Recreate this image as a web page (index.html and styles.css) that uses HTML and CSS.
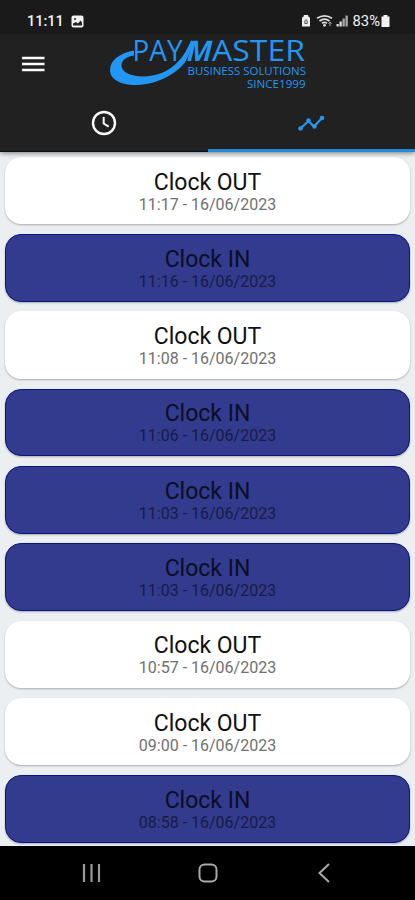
FILE: index.html
```html
<!DOCTYPE html>
<html lang="en">
<head>
<meta charset="utf-8">
<title>Paymaster</title>
<link rel="stylesheet" href="styles.css">
</head>
<body>
<div class="phone">
  <div class="status">
    <span class="time">11:11</span>
    <svg class="photo" width="13" height="13" viewBox="0 0 13 13"><rect x=".5" y=".5" width="12" height="12" rx="2" fill="#f2f2f2"/><path d="M2 10.5V8.5l3-1.5 2 1.5L9.5 5.500l1.500 2v3z" fill="#222"/><circle cx="4" cy="4" r="1" fill="#222"/></svg>
    <svg class="signals" width="48" height="16" viewBox="0 0 48 16">
      <path d="M0 5.500q0-2 1.800-2V2h4.400v1.500q1.800 0 1.800 2V13.500H0z" fill="#eee"/><path d="M2.800 10.500V8L4 6.500 5.200 8v2.500z" fill="none" stroke="#555"/>
      <g fill="none" stroke="#ddd" stroke-width="1.700"><path d="M15 5.300q7.500-5 15 0M17.500 8q5-3.800 10 0M20 10.300q2.500-1.800 5 0"/></g><circle cx="22.500" cy="12.300" r="1.400" fill="#ddd"/><path d="M28 13V9m-1.500 1.500L28 9l1.500 1.500" fill="none" stroke="#aaa"/>
      <g fill="#ddd"><path d="M34.500 11h2.300v2.500h-2.300zM37.500 8.500h2.300v5h-2.300z"/><path d="M40.500 5.500h2.300v8h-2.300zM43.500 2.500h2.300v11h-2.300z" fill="#aaa"/></g>
    </svg>
    <span class="percent">83%</span>
    <svg class="battery" width="9" height="12" viewBox="0 0 9 12"><path d="M2.500 0h4v1.500h2V12h-8V1.500h2z" fill="#f2f2f2"/></svg>
  </div>
  <header class="header">
    <svg class="menu" width="23" height="16" viewBox="0 0 23 16"><path d="M0 2h22.500M0 8h22.500M0 14h22.500" stroke="#fafafa" stroke-width="2.600"/></svg>
    <svg class="logo" width="215" height="61" viewBox="100 34 215 61">
      <g fill="#2196f3">
        <path d="M134 50.500C119 53 110 61 110 70c0 10 12 15.500 27 15 20-.6 38-10.500 48-22.500L195 42l-4-1.500C183 60 170 75 145 76.500c-15 .5-24-5-23.500-11.500.3-5 5-8.500 12.500-9.500z"/>
        <text class="mark" x="132.500" y="60.500" textLength="50" lengthAdjust="spacingAndGlyphs">PAY</text>
        <text class="mark mark-m" transform="translate(185 60.500) skewX(-14)" textLength="25" lengthAdjust="spacingAndGlyphs">M</text>
        <text class="mark" x="212" y="60.500" textLength="93" lengthAdjust="spacingAndGlyphs">ASTER</text>
        <text class="tagline" x="187.500" y="74.500" textLength="118.500" lengthAdjust="spacingAndGlyphs">BUSINESS SOLUTIONS</text>
        <text class="since" x="247" y="88" textLength="58.500" lengthAdjust="spacingAndGlyphs">SINCE1999</text>
      </g>
    </svg>
  </header>
  <nav class="tabs">
    <div class="tab"><svg width="26" height="26" viewBox="0 0 26 26" fill="none" stroke="#fafafa"><circle cx="13" cy="13" r="11" stroke-width="2.400"/><path d="M12.700 7v6.500l5 3.200" stroke-width="2"/></svg></div>
    <div class="tab active"><svg width="28" height="18" viewBox="0 0 28 18" fill="#2a96ea"><path d="M3.500 14.500l8-7.500 5.500 5.500 8-8.500" fill="none" stroke="#2a96ea" stroke-width="2.300"/><circle cx="3.500" cy="14.500" r="2.300"/><circle cx="11.500" cy="6.500" r="2.200"/><circle cx="17.500" cy="12.500" r="2.200"/><circle cx="25" cy="4" r="2.300"/></svg></div>
  </nav>
  <main class="list">
    <article class="card"><h2>Clock OUT</h2><p>11:17 - 16/06/2023</p></article>
    <article class="card in"><h2>Clock IN</h2><p>11:16 - 16/06/2023</p></article>
    <article class="card"><h2>Clock OUT</h2><p>11:08 - 16/06/2023</p></article>
    <article class="card in"><h2>Clock IN</h2><p>11:06 - 16/06/2023</p></article>
    <article class="card in"><h2>Clock IN</h2><p>11:03 - 16/06/2023</p></article>
    <article class="card in"><h2>Clock IN</h2><p>11:03 - 16/06/2023</p></article>
    <article class="card"><h2>Clock OUT</h2><p>10:57 - 16/06/2023</p></article>
    <article class="card"><h2>Clock OUT</h2><p>09:00 - 16/06/2023</p></article>
    <article class="card in"><h2>Clock IN</h2><p>08:58 - 16/06/2023</p></article>
  </main>
  <footer class="navbar">
    <svg width="20" height="20" viewBox="0 0 20 20"><path d="M3 1v18M10.500 1v18M18 1v18" stroke="#999" stroke-width="2.200"/></svg>
    <svg width="20" height="20" viewBox="0 0 20 20"><rect x="1.500" y="1.500" width="17" height="17" rx="5" fill="none" stroke="#aaa" stroke-width="2"/></svg>
    <svg width="20" height="20" viewBox="0 0 20 20"><path d="M15 1L5.500 10l9.500 9" fill="none" stroke="#aaa" stroke-width="2"/></svg>
  </footer>
</div>
</body>
</html>
```
FILE: styles.css
```css
body {
  margin: 0;
  font-family: Roboto, sans-serif;
}
svg {
  display: block;
  flex: none;
  overflow: visible;
}
.phone {
  width: 415px;
  height: 900px;
  display: flex;
  flex-direction: column;
  overflow: hidden;
  background: #ebeff2;
}
.status {
  height: 34px;
  box-sizing: border-box;
  padding: 8px 25px 0 27px;
  display: flex;
  align-items: center;
  background: #1a1a1a;
  color: #f2f2f2;
  font-size: 14.5px;
  font-weight: 500;
}
.photo {
  margin-left: 7px;
}
.signals {
  margin-left: auto;
}
.percent {
  margin-left: 3px;
  font-size: 14.800px;
  font-weight: 400;
}
.battery {
  margin-left: 1px;
}
.header {
  height: 61px;
  display: flex;
  background: #212121;
  position: relative;
  z-index: 1;
}
.menu {
  margin: 22px 55.500px 0 21.500px;
}
.mark {
  font-family: "Open Sans", sans-serif;
  font-size: 28.500px;
}
.mark-m {
  font-weight: 700;
}
.tagline {
  font-family: "Open Sans", sans-serif;
  font-size: 11.500px;
  font-weight: 500;
}
.since {
  font-family: "Open Sans", sans-serif;
  font-size: 10.500px;
  font-weight: 500;
}
.tabs {
  height: 57px;
  display: flex;
  background: #212121;
  box-shadow: 0 1px 5px rgba(0, 0, 0, .5);
  position: relative;
}
.tab {
  flex: 1;
  display: flex;
  justify-content: center;
  align-items: center;
  box-sizing: border-box;
  border-bottom: 1px solid #111;
}
.active {
  border-bottom: 3px solid #2388d5;
}
.active svg {
  margin-top: 2px;
}
.list {
  flex: 1;
  box-sizing: border-box;
  padding: 4.900px 5px 0;
  display: flex;
  flex-direction: column;
  gap: 9.8px;
}
.card {
  height: 67.500px;
  flex: none;
  box-sizing: border-box;
  padding-top: 11.700px;
  border-radius: 16px;
  background: #fff;
  box-shadow: 0 1px 2px rgba(0, 0, 0, .28);
  text-align: center;
  color: #111;
}
.card h2 {
  margin: 0;
  font-size: 23px;
  line-height: 28px;
  font-weight: 400;
}
.card p {
  margin: 0;
  font-size: 16px;
  line-height: 16px;
  color: #707070;
}
.in {
  background: #323b8d;
  border: 1px solid #0b1582;
  padding-top: 10.700px;
  color: #0b0e24;
}
.in p {
  color: #171b46;
}
.navbar {
  height: 54px;
  box-sizing: border-box;
  padding: 0 81px;
  display: flex;
  justify-content: space-between;
  align-items: center;
  background: #000;
}
```
